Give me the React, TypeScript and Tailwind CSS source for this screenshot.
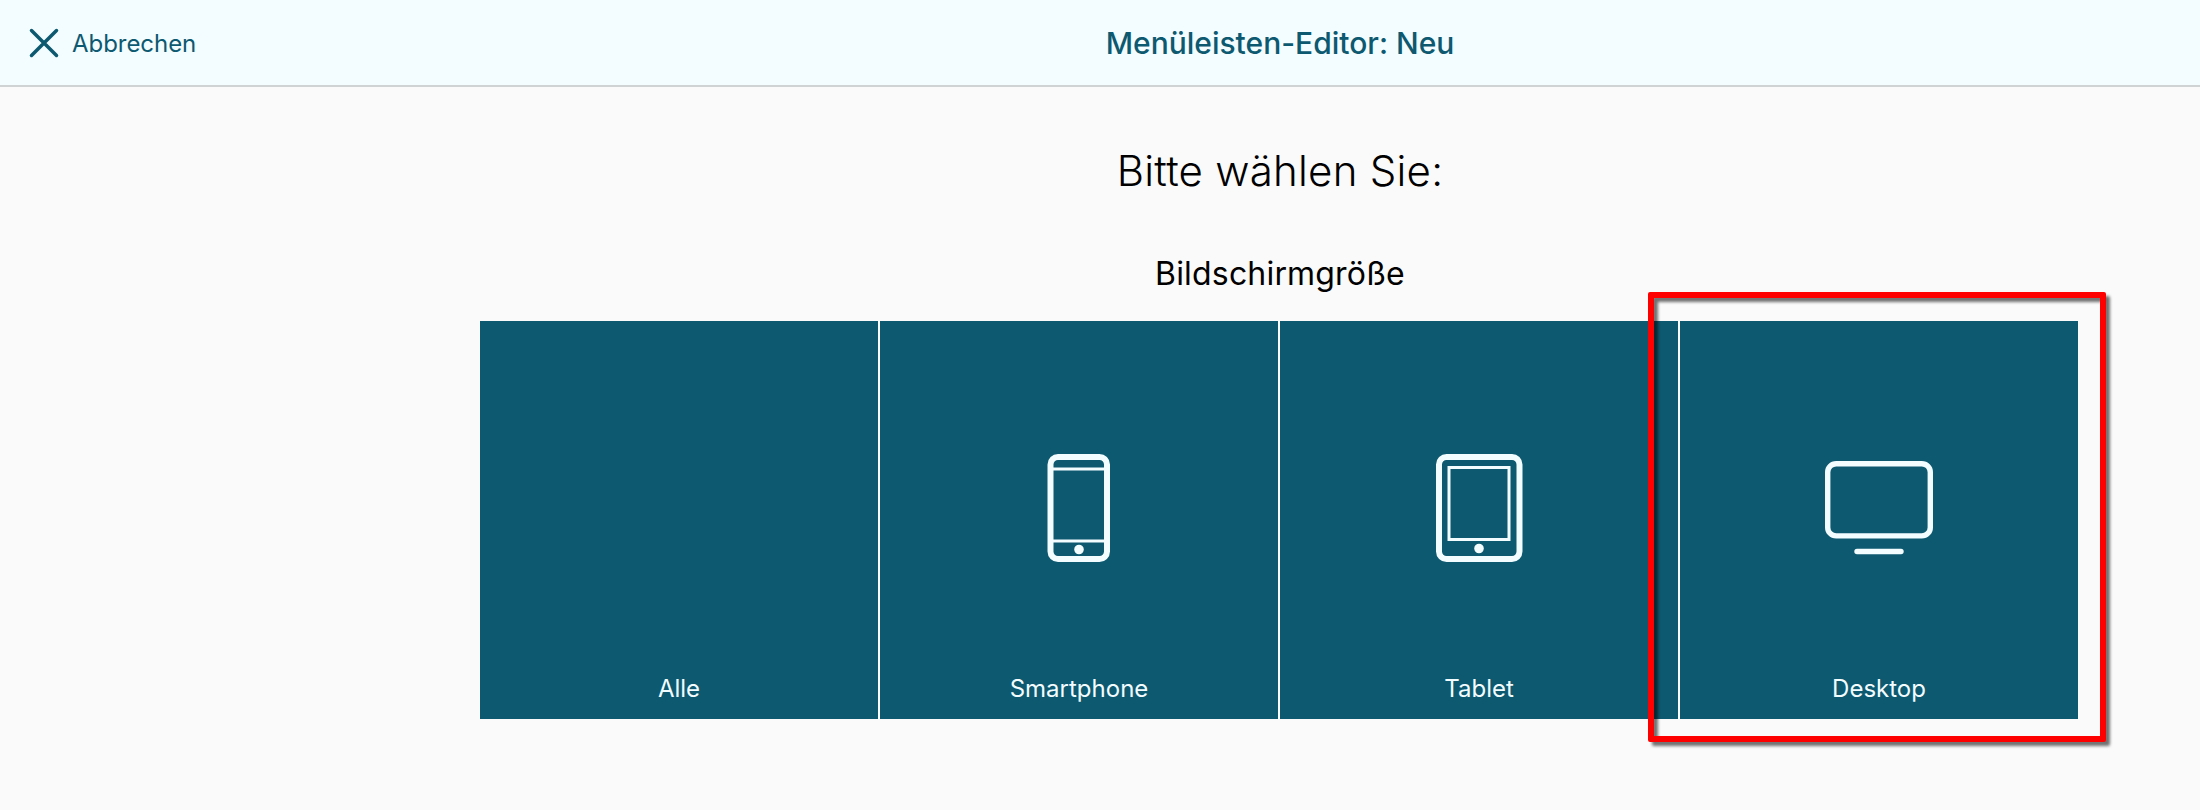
import type { ReactNode } from 'react';

function PhoneIcon() {
  return (
    <svg width="64" height="110" viewBox="0 0 64 110" fill="none" stroke="#f3fcff">
      <rect x="3.5" y="4" width="56.5" height="102" rx="7.5" strokeWidth="6" />
      <path d="M6 16H58M6 88H58" strokeWidth="3" />
      <circle cx="32" cy="96.5" r="4.8" fill="#f3fcff" stroke="none" />
    </svg>
  );
}

function TabletIcon() {
  return (
    <svg width="88" height="110" viewBox="0 0 88 110" fill="none" stroke="#f3fcff">
      <rect x="4" y="4" width="80.5" height="102" rx="7.5" strokeWidth="6" />
      <rect x="14" y="14.5" width="60" height="72" strokeWidth="3" />
      <circle cx="44" cy="95.5" r="4.8" fill="#f3fcff" stroke="none" />
    </svg>
  );
}

function DesktopIcon() {
  return (
    <svg width="110" height="96" viewBox="0 0 110 96" fill="none" stroke="#f3fcff">
      <rect x="3.7" y="3.7" width="102.6" height="72.2" rx="8.5" strokeWidth="5.4" />
      <path d="M33 91.5H77" strokeWidth="5.4" strokeLinecap="round" />
    </svg>
  );
}

function SizeTile({ label, children }: { label: string; children?: ReactNode }) {
  return (
    <button className="grid h-[398px] grid-rows-[348px_40px] justify-items-center bg-[#0c5970] text-[24px] leading-[40px] text-[#f3fcff]">
      <span className="flex items-center pt-[26px]">{children}</span>
      <span>{label}</span>
    </button>
  );
}

export default function App() {
  return (
    <div className="h-[810px] overflow-hidden bg-[#fafafa] font-['Inter',sans-serif] text-black">
      <header className="flex h-[87px] items-center border-b-2 border-[#d0d3d3] bg-[#f3fcff] text-[#0c5970]">
        <button className="flex w-[360px] items-center gap-[13px] pl-[29px] text-[24px]">
          <svg width="30" height="30" viewBox="0 0 30 30" stroke="#0c5970" strokeWidth="3.5" strokeLinecap="round">
            <path d="M2.5 2.5L27.5 27.5M27.5 2.5L2.5 27.5" />
          </svg>
          <span className="pt-[2px] tracking-[-0.05px]">Abbrechen</span>
        </button>
        <h1 className="flex-1 pt-[2px] text-center text-[30px] font-medium">Menüleisten-Editor: Neu</h1>
      </header>
      <main className="pl-[360px] text-center">
        <h2 className="pt-[54px] text-[42px] leading-[60px] font-light tracking-[0.25px]">Bitte wählen Sie:</h2>
        <h3 className="pt-[53px] text-[32px] leading-[40px] tracking-[0.18px]">Bildschirmgröße</h3>
        <div className="relative mt-[27px] ml-[120px] grid w-[1598px] grid-cols-4 gap-[2px]">
          <SizeTile label="Alle" />
          <SizeTile label="Smartphone">
            <PhoneIcon />
          </SizeTile>
          <SizeTile label="Tablet">
            <TabletIcon />
          </SizeTile>
          <SizeTile label="Desktop">
            <DesktopIcon />
          </SizeTile>
          <div className="pointer-events-none absolute top-[-29px] left-[1168px] h-[450px] w-[458px] rounded-[2px] border-6 border-[#ff0000] [filter:drop-shadow(4px_4px_1.5px_rgba(0,0,0,0.55))]" />
        </div>
      </main>
    </div>
  );
}
